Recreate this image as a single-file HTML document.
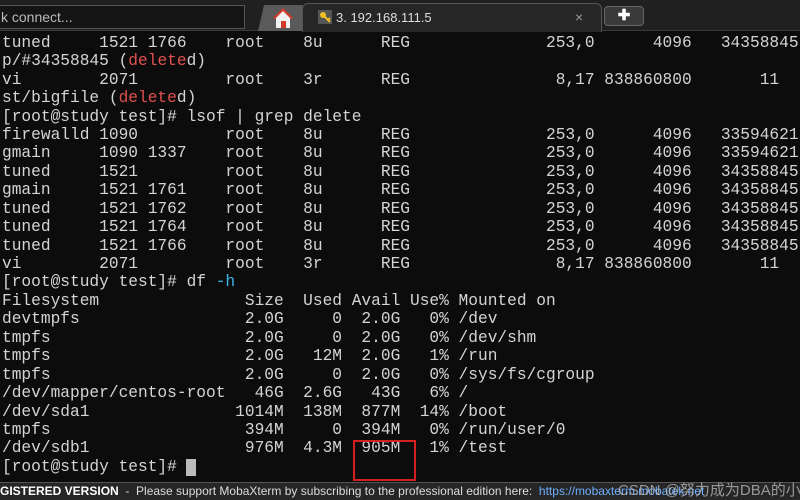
<!DOCTYPE html>
<html><head><meta charset="utf-8"><style>
*{margin:0;padding:0;box-sizing:border-box}
body{width:800px;height:500px;overflow:hidden;background:#0c0c0c;position:relative;font-family:"Liberation Mono",monospace}
#tabs{position:absolute;left:0;top:0;width:800px;height:31px;background:#202020;border-bottom:1px solid #3a3a3a}
#search{position:absolute;left:-4px;top:5px;width:249px;height:24px;border:1px solid #555;background:#141414;color:#bbb;font:14px "Liberation Sans",sans-serif;line-height:22px;padding-left:4px}
#home{position:absolute;left:258px;top:5px;width:50px;height:26px;background:#5a5a5a;clip-path:polygon(12% 0,88% 0,100% 100%,0 100%)}
#active{position:absolute;left:302px;top:3px;width:300px;height:29px;background:#262626;border:1px solid #555;border-bottom:none;border-radius:6px 6px 0 0;color:#ddd;font:13px "Liberation Sans",sans-serif}
#plus{position:absolute;left:604px;top:6px;width:40px;height:20px;background:#3a3a3a;border:1px solid #666;border-radius:4px;color:#fff;text-align:center;font:bold 15px/18px "Liberation Sans",sans-serif}
pre{position:absolute;left:2px;top:33.8px;font-size:16.2px;line-height:18.43px;color:#d4d4d4;white-space:pre;font-family:"Liberation Mono",monospace}
.r{color:#e0504e}.c{color:#3ab7e8}
#box{position:absolute;left:353px;top:440px;width:63px;height:41px;border:2px solid #d42020}
#cur{position:absolute;left:186px;top:459px;width:10px;height:17px;background:#bbb}
#status{position:absolute;left:0;top:482px;width:800px;height:18px;background:#262626;border-top:1px solid #555;color:#ddd;font:12px/17px "Liberation Sans",sans-serif;white-space:nowrap}
</style></head><body>
<div id="tabs">
<div id="search">k connect...</div>
<div id="home"><svg width="50" height="26" viewBox="0 0 50 26"><polygon points="25,4 16,13 18,13 18,23 32,23 32,13 34,13" fill="#f2f2f2"/><polygon points="25,3 15,13 17,14 25,6 33,14 35,13" fill="#d23a2a"/><rect x="23" y="16" width="5" height="7" fill="#d23a2a"/></svg></div>
<div id="active"><svg style="position:absolute;left:15px;top:6px" width="14" height="14" viewBox="0 0 14 14"><rect width="14" height="14" fill="#555"/><circle cx="5" cy="5" r="3" fill="#f0c020"/><path d="M6 6 L12 12 M10 10 L12 8" stroke="#f0c020" stroke-width="2"/></svg><span style="position:absolute;left:33px;top:6px">3. 192.168.111.5</span><span style="position:absolute;left:272px;top:5px;color:#999;font-size:14px">×</span></div>
<div id="plus">✚</div>
</div>
<pre>tuned     1521 1766    root    8u      REG              253,0      4096   34358845
p/#34358845 (<span class="r">delete</span>d)
vi        2071         root    3r      REG               8,17 838860800       11
st/bigfile (<span class="r">delete</span>d)
[root@study test]# lsof | grep delete
firewalld 1090         root    8u      REG              253,0      4096   33594621
gmain     1090 1337    root    8u      REG              253,0      4096   33594621
tuned     1521         root    8u      REG              253,0      4096   34358845
gmain     1521 1761    root    8u      REG              253,0      4096   34358845
tuned     1521 1762    root    8u      REG              253,0      4096   34358845
tuned     1521 1764    root    8u      REG              253,0      4096   34358845
tuned     1521 1766    root    8u      REG              253,0      4096   34358845
vi        2071         root    3r      REG               8,17 838860800       11
[root@study test]# df <span class="c">-h</span>
Filesystem               Size  Used Avail Use% Mounted on
devtmpfs                 2.0G     0  2.0G   0% /dev
tmpfs                    2.0G     0  2.0G   0% /dev/shm
tmpfs                    2.0G   12M  2.0G   1% /run
tmpfs                    2.0G     0  2.0G   0% /sys/fs/cgroup
/dev/mapper/centos-root   46G  2.6G   43G   6% /
/dev/sda1               1014M  138M  877M  14% /boot
tmpfs                    394M     0  394M   0% /run/user/0
/dev/sdb1                976M  4.3M  905M   1% /test
[root@study test]# </pre>
<div id="box"></div>
<div id="cur"></div>
<div id="status"><b style="color:#fff">GISTERED VERSION</b> &nbsp;- &nbsp;Please support MobaXterm by subscribing to the professional edition here: &nbsp;<span style="color:#6fb0ff">https://mobaxterm.mobatek.net</span></div>
<div style="position:absolute;left:618px;top:479px;color:rgba(200,200,200,0.7);font:15px 'Liberation Sans','Noto Sans CJK SC',sans-serif;white-space:nowrap">CSDN @努力成为DBA的小</div>
</body></html>
